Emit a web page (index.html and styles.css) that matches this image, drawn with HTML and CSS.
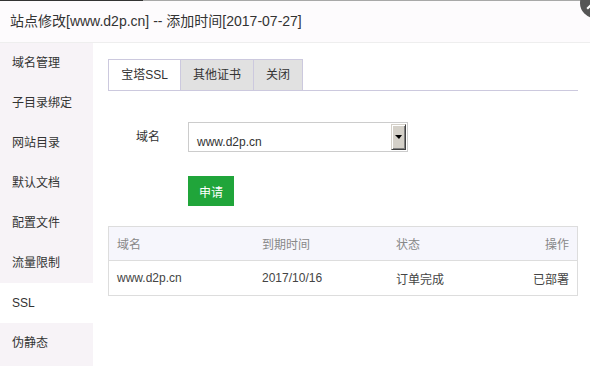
FILE: index.html
```html
<!DOCTYPE html>
<html>
<head>
<title>站点修改</title>
<link rel="stylesheet" href="styles.css">
</head>
<body>
<div class="top-line"><span class="top-line-dark"></span></div>
<div class="layer-title">站点修改[www.d2p.cn] -- 添加时间[2017-07-27]</div>
<span class="layer-close"></span>

<div class="layer-main">
<ul class="side-menu">
<li>域名管理</li>
<li>子目录绑定</li>
<li>网站目录</li>
<li>默认文档</li>
<li>配置文件</li>
<li>流量限制</li>
<li class="active">SSL</li>
<li>伪静态</li>
</ul>

<div class="side-content">
<div class="tab-nav">
<span class="tab on tab-bt">宝塔SSL</span>
<span class="tab tab-other">其他证书</span>
<span class="tab tab-close">关闭</span>
</div>

<div class="line">
<span class="tname">域名</span>
<div class="select-box">
<span class="select-text">www.d2p.cn</span>
<span class="select-arrow"><i></i></span>
</div>
</div>

<div class="line">
<button type="button" class="btn-apply">申请</button>
</div>

<table class="ssl-table">
<thead>
<tr>
<th class="col-domain">域名</th>
<th class="col-time">到期时间</th>
<th class="col-status">状态</th>
<th class="col-op">操作</th>
</tr>
</thead>
<tbody>
<tr>
<td>www.d2p.cn</td>
<td>2017/10/16</td>
<td>订单完成</td>
<td class="col-op">已部署</td>
</tr>
</tbody>
</table>
</div>
</div>
</body>
</html>
```

FILE: styles.css
```css
body {
margin: 0;
width: 590px;
height: 366px;
overflow: hidden;
position: relative;
background-color: #fff;
font-family: "Liberation Sans", "Noto Sans CJK SC", sans-serif;
font-size: 12px;
color: #444;
}

.top-line {
height: 1px;
background-color: #a8a8a8;
}

.top-line-dark {
display: block;
width: 143px;
height: 1px;
background-color: #333;
}

.layer-title {
height: 41px;
line-height: 41px;
padding-left: 10px;
font-size: 14px;
color: #333;
background-color: #fdfbfd;
border-bottom: 1px solid #eee;
}

.layer-close {
position: absolute;
top: -12px;
right: -20px;
width: 30px;
height: 30px;
border-radius: 50%;
background-color: #555;
}

.layer-close::before {
content: "";
position: absolute;
left: 6px;
top: 17px;
width: 8px;
height: 2px;
background-color: #fff;
transform: rotate(-45deg);
}

.layer-main {
display: flex;
height: 323px;
}

.side-menu {
list-style: none;
margin: 0;
padding: 0;
width: 93px;
background-color: #f7f3f7;
}

.side-menu li {
height: 40px;
line-height: 40px;
padding-left: 12px;
color: #333;
}

.side-menu li.active {
background-color: #fff;
}

.side-content {
flex: 1;
padding: 16px 12px 0 15px;
}

.tab-nav {
display: flex;
height: 31px;
border-bottom: 1px solid #ccc9de;
}

.tab {
box-sizing: border-box;
height: 31px;
line-height: 30px;
text-align: center;
color: #333;
background-color: #e1e1e1;
border-top: 1px solid #ccc9de;
border-left: 1px solid #ccc9de;
}

.tab.on {
background-color: #fff;
}

.tab-bt {
width: 72px;
}

.tab-other {
width: 73px;
}

.tab-close {
width: 50px;
border-right: 1px solid #ccc9de;
}

.line {
display: flex;
align-items: center;
margin-top: 31px;
}

.line + .line {
margin-top: 24px;
}

.tname {
width: 52px;
margin-right: 28px;
margin-top: -4px;
text-align: right;
color: #333;
}

.select-box {
box-sizing: border-box;
display: flex;
width: 220px;
height: 30px;
border: 1px solid #ccc;
background-color: #fff;
}

.select-text {
flex: 1;
padding: 9px 0 0 8px;
line-height: 20px;
color: #333;
}

.select-arrow {
box-sizing: border-box;
display: flex;
align-items: center;
justify-content: center;
width: 15px;
height: 26px;
margin: 1px 1px 0 0;
background-color: #d4d0c8;
border-top: 1px solid #d4d0c8;
border-left: 1px solid #d4d0c8;
border-right: 1px solid #404040;
border-bottom: 1px solid #404040;
box-shadow: inset 1px 1px 0 #fff, inset -1px -1px 0 #808080;
}

.select-arrow i {
width: 0;
height: 0;
border-left: 4px solid transparent;
border-right: 3px solid transparent;
border-top: 4px solid #000;
}

.btn-apply {
width: 46px;
height: 30px;
margin-left: 80px;
padding: 0;
border: 0;
background-color: #20a53a;
color: #fff;
font-family: "Liberation Sans", "Noto Sans CJK SC", sans-serif;
font-size: 12px;
}

.ssl-table {
width: 470px;
margin-top: 20px;
border-collapse: collapse;
border: 1px solid #ddd;
}

.ssl-table th,
.ssl-table td {
padding: 0 8px;
text-align: left;
font-weight: normal;
}

.ssl-table th {
height: 33px;
color: #888;
background-color: #f6f6fc;
border-bottom: 1px solid #ddd;
}

.ssl-table td {
height: 34px;
color: #444;
}

.ssl-table .col-domain {
width: 129px;
}

.ssl-table .col-time {
width: 118px;
}

.ssl-table .col-status {
width: 100px;
}

.ssl-table .col-op {
text-align: right;
}
```
